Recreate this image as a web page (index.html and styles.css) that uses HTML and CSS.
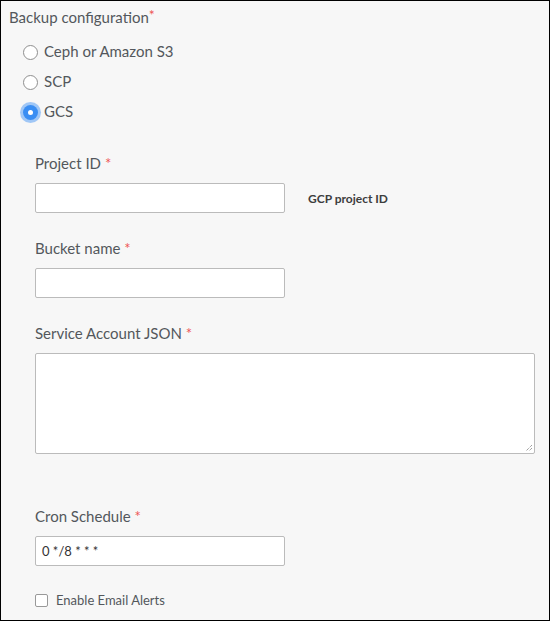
FILE: index.html
```html
<!DOCTYPE html>
<html>
<head>
<meta charset="utf-8">
<link rel="stylesheet" href="styles.css">
</head>
<body>
<div class="page">
  <div class="title">Backup configuration<span class="req">*</span></div>
  <div class="radios">
    <div class="radio-row"><span class="radio"></span><span class="radio-label">Ceph or Amazon S3</span></div>
    <div class="radio-row"><span class="radio"></span><span class="radio-label">SCP</span></div>
    <div class="radio-row"><span class="radio checked"></span><span class="radio-label">GCS</span></div>
  </div>
  <div class="section">
    <div class="group">
      <div class="label">Project ID <span class="req">*</span></div>
      <div class="field-row">
        <div class="input"></div>
        <span class="help">GCP project ID</span>
      </div>
    </div>
    <div class="group">
      <div class="label">Bucket name <span class="req">*</span></div>
      <div class="field-row">
        <div class="input"></div>
      </div>
    </div>
    <div class="group json">
      <div class="label">Service Account JSON <span class="req">*</span></div>
      <div class="textarea">
        <svg class="grip" width="8" height="8" viewBox="0 0 8 8"><path d="M7 1 L1 7 M7 4 L4 7" stroke="#777" stroke-width="1" stroke-dasharray="1 1"/></svg>
      </div>
    </div>
    <div class="group cron">
      <div class="label">Cron Schedule <span class="req">*</span></div>
      <div class="input"><span class="value">0 */8 * * *</span></div>
    </div>
    <div class="check-row"><span class="checkbox"></span><span class="check-label">Enable Email Alerts</span></div>
  </div>
</div>
</body>
</html>
```

FILE: styles.css
```css
html, body {
  margin: 0;
  padding: 0;
}
body {
  font-family: Lato, "Open Sans", sans-serif;
  color: #53575c;
}
.page {
  box-sizing: border-box;
  width: 550px;
  height: 621px;
  border: 1px solid #000;
  background: #f7f7f7;
  padding: 4px 8px;
}
.title {
  font-size: 15px;
  line-height: 24px;
}
.req {
  color: #e55;
}
.title .req {
  font-size: 14px;
  vertical-align: top;
  position: relative;
  top: -2px;
}
.radios {
  margin-top: 7px;
  padding-left: 14px;
}
.radio-row {
  display: flex;
  align-items: center;
  height: 30px;
}
.radio {
  box-sizing: border-box;
  width: 15px;
  height: 15px;
  border-radius: 50%;
  border: 1px solid #8f8f8f;
  background: #fff;
  margin-right: 6px;
  margin-top: 2px;
}
.radio.checked {
  border: none;
  background: #3a8ef3;
  position: relative;
  box-shadow: 0 0 0 3px rgba(90, 160, 245, 0.55);
}
.radio.checked::after {
  content: "";
  position: absolute;
  left: 5px;
  top: 5px;
  width: 5px;
  height: 5px;
  border-radius: 50%;
  background: #fff;
}
.radio-label {
  font-size: 15px;
}
.section {
  padding-left: 26px;
  margin-top: 27px;
}
.group {
  margin-bottom: 25px;
}
.label {
  font-size: 15px;
  line-height: 20px;
  margin-bottom: 10px;
}
.json .label {
  margin-top: 1px;
}
.field-row {
  display: flex;
  align-items: center;
}
.input {
  box-sizing: border-box;
  width: 250px;
  height: 30px;
  background: #fff;
  border: 1px solid #bbb;
  border-radius: 2px;
  display: flex;
  align-items: center;
  padding-left: 6px;
}
.help {
  margin-left: 23px;
  font-size: 12px;
  font-weight: bold;
  color: #3d3d3d;
}
.textarea {
  box-sizing: border-box;
  width: 500px;
  height: 101px;
  background: #fff;
  border: 1px solid #bbb;
  border-radius: 2px;
  position: relative;
}
.grip {
  position: absolute;
  right: 1px;
  bottom: 1px;
}
.cron {
  margin-top: 52px;
  margin-bottom: 0;
}
.value {
  font-size: 13px;
  color: #333;
}
.check-row {
  display: flex;
  align-items: center;
  margin-top: 26px;
}
.checkbox {
  box-sizing: border-box;
  width: 13px;
  height: 13px;
  border: 1px solid #999;
  border-radius: 2px;
  background: #fff;
  margin-right: 8px;
}
.check-label {
  font-size: 13px;
}
```
